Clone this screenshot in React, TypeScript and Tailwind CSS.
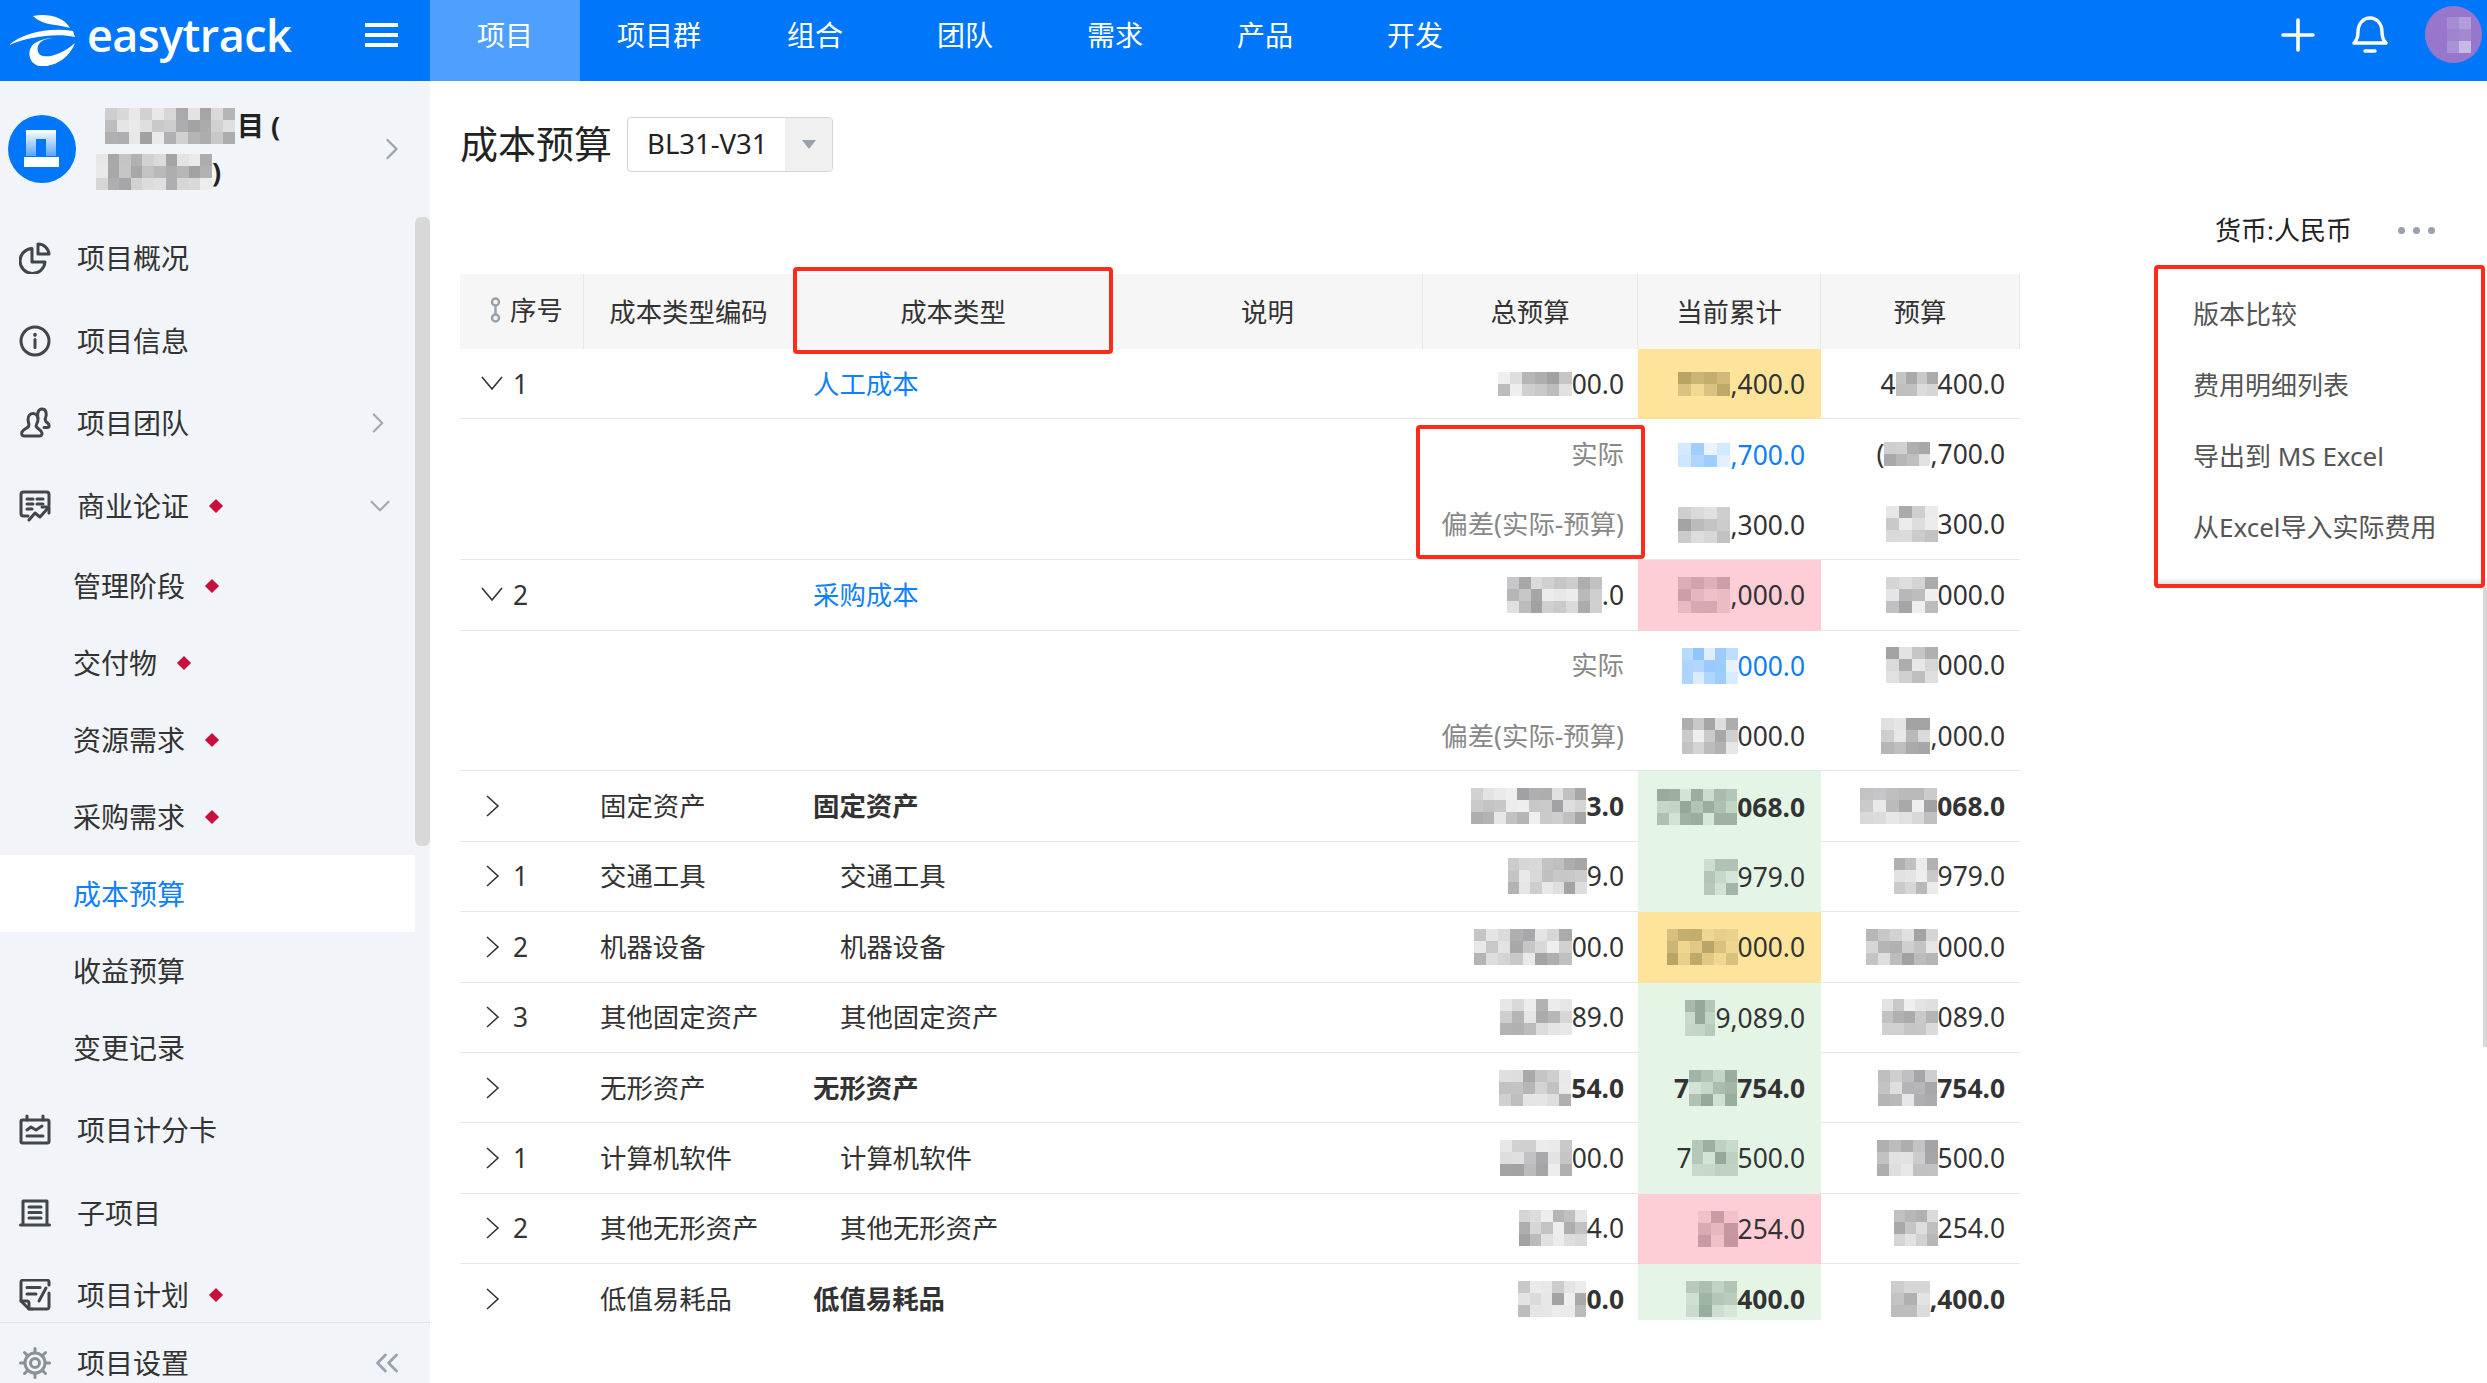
import { ChevronDown, ChevronRight, ChevronsLeft } from "lucide-react"

type Tone = "gray" | "amber" | "blue" | "pink" | "green" | "purple"

const toneBase: Record<Tone, number[]> = {
  gray: [150, 150, 152],
  amber: [176, 156, 96],
  blue: [130, 190, 255],
  pink: [186, 140, 150],
  green: [140, 160, 145],
  purple: [205, 195, 235],
}
const toneBg: Record<Tone, number[]> = {
  gray: [255, 255, 255],
  amber: [254, 228, 155],
  blue: [255, 255, 255],
  pink: [255, 205, 214],
  green: [228, 245, 230],
  purple: [151, 119, 204],
}

// pixelated patch used where the screenshot has blurred figures
function Mosaic({ w, rows = 2, tone = "gray", seed = 1 }: { w: number; rows?: number; tone?: Tone; seed?: number }) {
  const cols = Math.max(1, Math.round(w / 12))
  const cells = []
  for (let i = 0; i < cols * rows; i++) {
    const n = Math.abs(Math.sin((i + 1) * 12.9898 + seed * 78.233) * 43758.5453) % 1
    const mix = 0.15 + n * 0.75
    const c = toneBase[tone].map((v, k) => Math.round(toneBg[tone][k] + (v - toneBg[tone][k]) * mix))
    cells.push(<span key={i} style={{ backgroundColor: `rgb(${c.join(",")})` }} />)
  }
  return (
    <span
      className="grid shrink-0"
      style={{ width: w, height: rows * 12, gridTemplateColumns: `repeat(${cols}, 1fr)`, gridTemplateRows: `repeat(${rows}, 1fr)` }}
    >
      {cells}
    </span>
  )
}

const iconProps = {
  viewBox: "0 0 32 32",
  fill: "none",
  stroke: "#41464d",
  strokeWidth: 3,
  strokeLinecap: "round" as const,
  strokeLinejoin: "round" as const,
  className: "w-[32px] h-[32px]",
}

function PieIcon() {
  return (
    <svg {...iconProps}>
      <path d="M13 6.500A12.500 12.500 0 1 0 26 20H13Z" />
      <path d="M19 2v10h11A11 11 0 0 0 19 2Z" />
    </svg>
  )
}
function InfoIcon() {
  return (
    <svg {...iconProps}>
      <circle cx="16" cy="16" r="14" />
      <path d="M16 14.500v8" />
      <path d="M16 9.500v.6" strokeWidth={3.600} />
    </svg>
  )
}
function TeamIcon() {
  return (
    <svg {...iconProps}>
      <path d="M19 11c-1-2.500-.5-9 4-9 4.500 0 5 6 3.500 9-1 2 0 3.500 2 5 2 1.500 2.500 4.500-.5 4.500h-3" />
      <path d="M9 12.500c0-8 10-8 10 0 0 4-3 5-1.500 7.500 1.500 2 5 3 5.500 6 .3 2-1 3-2.500 3H5c-2 0-3-2-2-4 1.500-3 5-3.500 6.500-5.500 1.500-2-.5-3.500-.5-7.500Z" />
    </svg>
  )
}
function CaseIcon() {
  return (
    <svg {...iconProps}>
      <path d="M9 26H4.500C3 26 2 25 2 23.500V4.500C2 3 3 2 4.500 2h23C29 2 30 3 30 4.500V15" />
      <path d="M8 9h6M18 9h6M8 14h6M18 14h6M8 19h5" />
      <path d="m10 30 6-7 5 4 8-9" />
      <path d="M23 17h7v6" />
    </svg>
  )
}
function ScoreIcon() {
  return (
    <svg {...iconProps}>
      <rect x="2" y="6" width="28" height="23" rx="1.500" />
      <path d="M8 2v4M24 2v4" />
      <path d="m8 16 4-3 5 3 6-4" />
      <path d="M8 22h16" />
    </svg>
  )
}
function SubIcon() {
  return (
    <svg {...iconProps}>
      <path d="M4 27V4h24v23" />
      <path d="M1.500 28h29" />
      <path d="M10 10h12M10 15.500h12M10 21h12" />
    </svg>
  )
}
function PlanIcon() {
  return (
    <svg {...iconProps}>
      <path d="M13 30H28c1 0 2-1 2-2V14" />
      <path d="M30 6V3c0-1-1-2-2-2H4C3 1 2 2 2 3v19l8 8h3" />
      <path d="M2 22h6c1 0 2 1 2 2v6" />
      <path d="M8 8.500h13M8 15h9M20 22l7-13" />
    </svg>
  )
}
function GearIcon() {
  return (
    <svg viewBox="0 0 32 32" fill="none" stroke="#8b9199" strokeWidth={3} strokeLinecap="round" className="w-[32px] h-[32px]">
      <circle cx="16" cy="16" r="10" />
      <circle cx="16" cy="16" r="4.500" />
      <path d="M16 1.500v4M16 26.500v4M1.500 16h4M26.500 16h4M5.500 5.500l3 3M23.500 23.500l3 3M5.500 26.500l3-3M23.500 8.500l3-3" />
    </svg>
  )
}

function RowChevron({ open }: { open: boolean }) {
  return open ? (
    <svg viewBox="0 0 22 15" fill="none" stroke="#333" strokeWidth={1.600} className="w-[22px] h-[15px]">
      <path d="m1 1 10 12L21 1" />
    </svg>
  ) : (
    <svg viewBox="0 0 15 22" fill="none" stroke="#333" strokeWidth={1.600} className="w-[15px] h-[22px]">
      <path d="m2 1 11 10L2 21" />
    </svg>
  )
}

type NavItem = { label: string; icon?: React.ReactNode; dot?: boolean; active?: boolean; arrow?: "right" | "down" }

const navTop: NavItem[] = [
  { label: "项目概况", icon: <PieIcon /> },
  { label: "项目信息", icon: <InfoIcon /> },
  { label: "项目团队", icon: <TeamIcon />, arrow: "right" },
  { label: "商业论证", icon: <CaseIcon />, dot: true, arrow: "down" },
]
const navSub: NavItem[] = [
  { label: "管理阶段", dot: true },
  { label: "交付物", dot: true },
  { label: "资源需求", dot: true },
  { label: "采购需求", dot: true },
  { label: "成本预算", active: true },
  { label: "收益预算" },
  { label: "变更记录" },
]
const navBottom: NavItem[] = [
  { label: "项目计分卡", icon: <ScoreIcon /> },
  { label: "子项目", icon: <SubIcon /> },
  { label: "项目计划", icon: <PlanIcon />, dot: true },
]

const Dot = () => <span className="ml-[22px] size-[10px] rotate-45 bg-[#c8103c]" />

function MainNav({ item }: { item: NavItem }) {
  return (
    <div className="flex h-[82.500px] shrink-0 items-center pl-[19px] text-[28px] leading-[40px] text-[#333]">
      <span className="flex w-[58px] shrink-0">{item.icon}</span>
      {item.label}
      {item.dot && <Dot />}
      {item.arrow === "right" && <ChevronRight className="ml-auto mr-[20px] size-[34px] text-[#a3a8b3]" strokeWidth={1.500} />}
      {item.arrow === "down" && <ChevronDown className="ml-auto mr-[18px] size-[34px] text-[#a3a8b3]" strokeWidth={1.500} />}
    </div>
  )
}

function SubNav({ item }: { item: NavItem }) {
  return (
    <div
      className={
        item.active
          ? "flex h-[77px] shrink-0 items-center bg-white pl-[73px] text-[28px] leading-[40px] text-[#1080ff]"
          : "flex h-[77px] shrink-0 items-center pl-[73px] text-[28px] leading-[40px] text-[#333]"
      }
    >
      {item.label}
      {item.dot && <Dot />}
    </div>
  )
}

function Sidebar() {
  return (
    <aside className="flex h-full w-[430px] shrink-0 flex-col bg-[#f1f4f8]">
      <div className="flex h-[136px] shrink-0 items-center pl-[8px]">
        <div className="flex size-[68px] shrink-0 items-center justify-center rounded-full bg-[#0077fa]">
          <svg viewBox="0 0 36 38" className="w-[36px] h-[38px]">
            <defs>
              <linearGradient id="tower" x1="0" y1="0" x2="0" y2="1">
                <stop offset="0" stopColor="#ffffff" />
                <stop offset="1" stopColor="#5aa5ff" />
              </linearGradient>
            </defs>
            <path d="M2 0h30v26H22V9h-10v17H2Z" fill="url(#tower)" />
            <rect x="0" y="27" width="35" height="10" fill="#fff" />
          </svg>
        </div>
        <div className="ml-[20px] flex flex-col gap-[10px] text-[27px] font-bold leading-[36px] text-[#222]">
          <div className="ml-[9px] flex items-center gap-[2px]">
            <Mosaic w={130} rows={3} seed={3} />
            <span>目 (</span>
          </div>
          <div className="flex items-center">
            <Mosaic w={116} rows={3} seed={7} />
            <span>)</span>
          </div>
        </div>
        <ChevronRight className="ml-auto mr-[20px] size-[36px] text-[#9ca3af]" strokeWidth={1.500} />
      </div>
      <div className="flex min-h-0 flex-1">
        <nav className="flex w-[415px] flex-col overflow-hidden">
          {navTop.map((item) => (
            <MainNav key={item.label} item={item} />
          ))}
          {navSub.map((item) => (
            <SubNav key={item.label} item={item} />
          ))}
          <div className="h-[3px] shrink-0" />
          {navBottom.map((item) => (
            <MainNav key={item.label} item={item} />
          ))}
        </nav>
        <div className="w-[15px]">
          <div className="h-[629px] rounded-[6px] bg-[#d8d8d8]" />
        </div>
      </div>
      <div className="flex h-[61px] shrink-0 items-center border-t border-[#e0e3e8] pl-[19px] pt-[20px] text-[28px] leading-[40px] text-[#333]">
        <span className="flex w-[58px] shrink-0">
          <GearIcon />
        </span>
        项目设置
        <ChevronsLeft className="ml-auto mr-[24px] size-[38px] text-[#9ca3af]" strokeWidth={1.800} />
      </div>
    </aside>
  )
}

const tabs = [
  { label: "项目", cls: "bg-[#4f9fff] px-[47px]" },
  { label: "项目群", cls: "pl-[37px] pr-[39px]" },
  { label: "组合", cls: "px-[47px]" },
  { label: "团队", cls: "px-[47px]" },
  { label: "需求", cls: "px-[47px]" },
  { label: "产品", cls: "px-[47px]" },
  { label: "开发", cls: "px-[47px]" },
]

function TopBar() {
  return (
    <header className="flex h-[81px] w-full shrink-0 items-stretch bg-[#0077fa] text-white">
      <div className="flex w-[430px] shrink-0 items-center pb-[12px]">
        <svg viewBox="0 0 66 52" fill="#fff" className="ml-[9px] mt-[10px] w-[66px] h-[52px] shrink-0">
          <path d="M24 2C38-1 55 3 61 14 48 10 34 12 24 2Z" />
          <path d="M0 31C14 19 40 13 64 17l2 6C48 19 22 22 0 31Z" />
          <path d="M44 24C30 25 26 33 30 40 36 46 54 40 66 29 60 46 42 54 30 52 18 49 18 34 26 29 31 26 37 24 44 24Z" />
        </svg>
        <span className="ml-[12px] font-['Open_Sans',sans-serif] text-[45px] font-semibold leading-[60px] tracking-[-0.6px]">easytrack</span>
        <div className="ml-auto mr-[32px] flex w-[33px] flex-col gap-[6px]">
          <span className="h-[4px] bg-white" />
          <span className="h-[4px] bg-white" />
          <span className="h-[4px] bg-white" />
        </div>
      </div>
      <nav className="flex text-[28px] leading-[40px]">
        {tabs.map((t) => (
          <div key={t.label} className={`flex items-center pb-[12px] ${t.cls}`}>
            {t.label}
          </div>
        ))}
      </nav>
      <div className="ml-auto flex items-center pb-[12px]">
        <svg viewBox="0 0 34 34" fill="none" stroke="#fff" strokeWidth={3.600} strokeLinecap="round" className="w-[34px] h-[34px]">
          <path d="M17 2v30M2 17h30" />
        </svg>
        <svg viewBox="0 0 36 38" fill="none" stroke="#fff" strokeWidth={3.400} strokeLinecap="round" strokeLinejoin="round" className="ml-[37px] w-[36px] h-[38px]">
          <path d="M2 27c3-3 4-6 4-11C6 8 11 2 18 2s12 6 12 14c0 5 1 8 4 11Z" />
          <path d="M13 35h10" />
        </svg>
        <div className="ml-[37px] mr-[5px] flex size-[57px] items-center justify-center rounded-full bg-[#9777cc] pl-[10px]">
          <Mosaic w={24} rows={3} tone="purple" seed={4} />
        </div>
      </div>
    </header>
  )
}

type Amount = { pre?: string; w: number; text: string; rows?: number }
type Row = {
  no?: string
  open?: boolean
  code?: string
  name?: string
  link?: boolean
  bold?: boolean
  indent?: boolean
  label?: string
  total?: Amount
  cur: Amount
  bud: Amount
  tone?: Tone
  curText?: string
  boxed?: boolean
}

const rows: Row[] = [
  { no: "1", open: true, name: "人工成本", link: true, total: { w: 74, text: "00.0", rows: 2 }, cur: { w: 52, text: ",400.0", rows: 2 }, bud: { pre: "4", w: 42, text: "400.0", rows: 2 }, tone: "amber" },
  { label: "实际", boxed: true, cur: { w: 52, text: ",700.0", rows: 2 }, bud: { pre: "(", w: 46, text: ",700.0", rows: 2 }, tone: "blue", curText: "text-[#0f7dfb]" },
  { label: "偏差(实际-预算)", cur: { w: 52, text: ",300.0" }, bud: { w: 52, text: "300.0" } },
  { no: "2", open: true, name: "采购成本", link: true, total: { w: 95, text: ".0" }, cur: { w: 52, text: ",000.0" }, bud: { w: 52, text: "000.0" }, tone: "pink" },
  { label: "实际", cur: { w: 56, text: "000.0" }, bud: { w: 52, text: "000.0" }, tone: "blue", curText: "text-[#0f7dfb]" },
  { label: "偏差(实际-预算)", cur: { w: 56, text: "000.0" }, bud: { w: 49, text: ",000.0" } },
  { code: "固定资产", name: "固定资产", bold: true, total: { w: 115, text: "3.0" }, cur: { w: 80, text: "068.0" }, bud: { w: 77, text: "068.0" }, tone: "green" },
  { no: "1", code: "交通工具", name: "交通工具", indent: true, total: { w: 79, text: "9.0" }, cur: { w: 34, text: "979.0" }, bud: { w: 44, text: "979.0" }, tone: "green" },
  { no: "2", code: "机器设备", name: "机器设备", indent: true, total: { w: 98, text: "00.0" }, cur: { w: 71, text: "000.0" }, bud: { w: 72, text: "000.0" }, tone: "amber" },
  { no: "3", code: "其他固定资产", name: "其他固定资产", indent: true, total: { w: 72, text: "89.0" }, cur: { w: 30, text: "9,089.0" }, bud: { w: 56, text: "089.0" }, tone: "green" },
  { code: "无形资产", name: "无形资产", bold: true, total: { w: 72, text: "54.0" }, cur: { pre: "7", w: 48, text: "754.0" }, bud: { w: 59, text: "754.0" }, tone: "green" },
  { no: "1", code: "计算机软件", name: "计算机软件", indent: true, total: { w: 72, text: "00.0" }, cur: { pre: "7", w: 46, text: "500.0" }, bud: { w: 61, text: "500.0" }, tone: "green" },
  { no: "2", code: "其他无形资产", name: "其他无形资产", indent: true, total: { w: 68, text: "4.0" }, cur: { w: 40, text: "254.0" }, bud: { w: 44, text: "254.0" }, tone: "pink" },
  { code: "低值易耗品", name: "低值易耗品", bold: true, total: { w: 68, text: "0.0" }, cur: { w: 51, text: "400.0" }, bud: { w: 39, text: ",400.0" }, tone: "green" },
]

const cellBg: Record<Tone, string> = {
  gray: "",
  amber: "bg-[#fee49b]",
  pink: "bg-[#ffcdd6]",
  green: "bg-[#e4f5e6]",
  blue: "",
  purple: "",
}

function Figure({ a, tone = "gray", seed, className = "" }: { a: Amount; tone?: Tone; seed: number; className?: string }) {
  return (
    <div className={`flex h-full items-center justify-end ${className}`}>
      {a.pre && <span>{a.pre}</span>}
      <Mosaic w={a.w} rows={a.rows ?? 3} tone={tone} seed={seed} />
      <span>{a.text}</span>
    </div>
  )
}

const gridCols = "grid grid-cols-[124px_210px_319px_310px_215px_183px_199px]"

function TableRow({ row, i }: { row: Row; i: number }) {
  const tinted = row.label ? "" : row.tone ? cellBg[row.tone] : ""
  const line = row.label === "实际" ? "border-transparent" : "border-[#e6e6e6]"
  return (
    <div className={`${gridCols} h-[70.400px] border-b ${line} ${row.bold ? "font-bold" : ""}`}>
      <div className="flex items-center pl-[20px] font-normal">
        {!row.label && (
          <span className="flex w-[33px] justify-center pr-[9px]">
            <RowChevron open={!!row.open} />
          </span>
        )}
        {row.no}
      </div>
      <div className="flex items-center pl-[16px] font-normal">{row.code}</div>
      <div className={row.indent ? "flex items-center pl-[46px]" : "flex items-center pl-[19px]"}>
        {row.link ? <span className="text-[#1080ff]">{row.name}</span> : row.name}
      </div>
      <div />
      <div className="relative pr-[14px]">
        {row.label ? <div className="flex h-full items-center justify-end text-[#888]">{row.label}</div> : row.total && <Figure a={row.total} seed={i + 11} />}
        {row.boxed && <div className="absolute -left-[7px] -right-[7px] top-[6px] z-10 h-[134px] rounded-[4px] border-[4px] border-[#ff2a1a]" />}
      </div>
      <div className={`-mb-px pr-[16px] ${tinted}`}>
        <Figure a={row.cur} tone={row.tone} seed={i + 31} className={row.curText} />
      </div>
      <div className="pr-[15px]">
        <Figure a={row.bud} seed={i + 51} />
      </div>
    </div>
  )
}

const headCell = "flex items-center justify-center border-r border-[#e8e8e8]"

function BudgetTable() {
  return (
    <div className="ml-[30px] mt-[19px] w-[1560px] text-[26.400px] leading-[36px] text-[#333]">
      <div className={`${gridCols} h-[75px] bg-[#f6f6f6]`}>
        <div className={`${headCell} pb-[4px] pl-[10px]`}>
          <svg viewBox="0 0 11 26" fill="none" stroke="#9aa0ae" strokeWidth={2.400} className="mr-[9px] w-[11px] h-[26px]">
            <circle cx="5.500" cy="5" r="3.500" />
            <circle cx="5.500" cy="21" r="3.500" />
            <path d="M5.500 8.500v9" />
          </svg>
          序号
        </div>
        <div className={headCell}>成本类型编码</div>
        <div className={`${headCell} relative`}>
          成本类型
          <div className="absolute -left-px -right-px -top-[7px] -bottom-[5px] rounded-[4px] border-[4px] border-[#ff2a1a]" />
        </div>
        <div className={headCell}>说明</div>
        <div className={headCell}>总预算</div>
        <div className={headCell}>当前累计</div>
        <div className={headCell}>预算</div>
      </div>
      <div className="h-[971px] overflow-hidden">
        {rows.map((row, i) => (
          <TableRow key={i} row={row} i={i} />
        ))}
      </div>
    </div>
  )
}

const menuItems = ["版本比较", "费用明细列表", "导出到 MS Excel", "从Excel导入实际费用"]

function MoreMenu() {
  return (
    <div className="absolute left-[1724px] top-[184px] w-[331px] rounded-[4px] border-[4px] border-[#ff2a1a] bg-white">
      <div className="flex flex-col pl-[35px] pt-[9px] pb-[22px] text-[26px] leading-[36px] text-[#555] shadow-[inset_0_-5px_4px_-2px_#e3e3e3]">
        {menuItems.map((m) => (
          <div key={m} className="flex h-[71px] items-center">
            {m}
          </div>
        ))}
      </div>
    </div>
  )
}

export default function App() {
  return (
    <div className="flex h-[1383px] w-[2487px] flex-col overflow-hidden bg-white font-['Noto_Sans','Noto_Sans_CJK_SC',sans-serif]">
      <TopBar />
      <div className="flex min-h-0 flex-1">
        <Sidebar />
        <main className="relative min-w-0 flex-1">
          <div className="flex h-[124px] items-center pl-[30px]">
            <h1 className="text-[38px] font-normal leading-[50px] text-[#222]">成本预算</h1>
            <div className="ml-[15px] mt-[2px] flex h-[55px] w-[206px] items-stretch overflow-hidden rounded-[4px] border border-[#d4d4d4] text-[27.500px] leading-[36px] text-[#222]">
              <span className="flex flex-1 items-center pl-[19px]">BL31-V31</span>
              <span className="flex w-[47px] items-center justify-center bg-[#f0f0f0]">
                <span className="size-0 border-x-[7px] border-t-[9px] border-x-transparent border-t-[#9aa0ae]" />
              </span>
            </div>
          </div>
          <div className="flex h-[50px] items-center justify-end gap-[46px] pr-[52px] text-[26px] leading-[36px] text-[#222]">
            货币:人民币
            <span className="flex gap-[8px]">
              <span className="size-[7px] rounded-full bg-[#9aa0ae]" />
              <span className="size-[7px] rounded-full bg-[#9aa0ae]" />
              <span className="size-[7px] rounded-full bg-[#9aa0ae]" />
            </span>
          </div>
          <BudgetTable />
          <MoreMenu />
          <div className="absolute right-0 top-[506px] h-[460px] w-[4px] bg-[#d8d8d8]" />
        </main>
      </div>
    </div>
  )
}
